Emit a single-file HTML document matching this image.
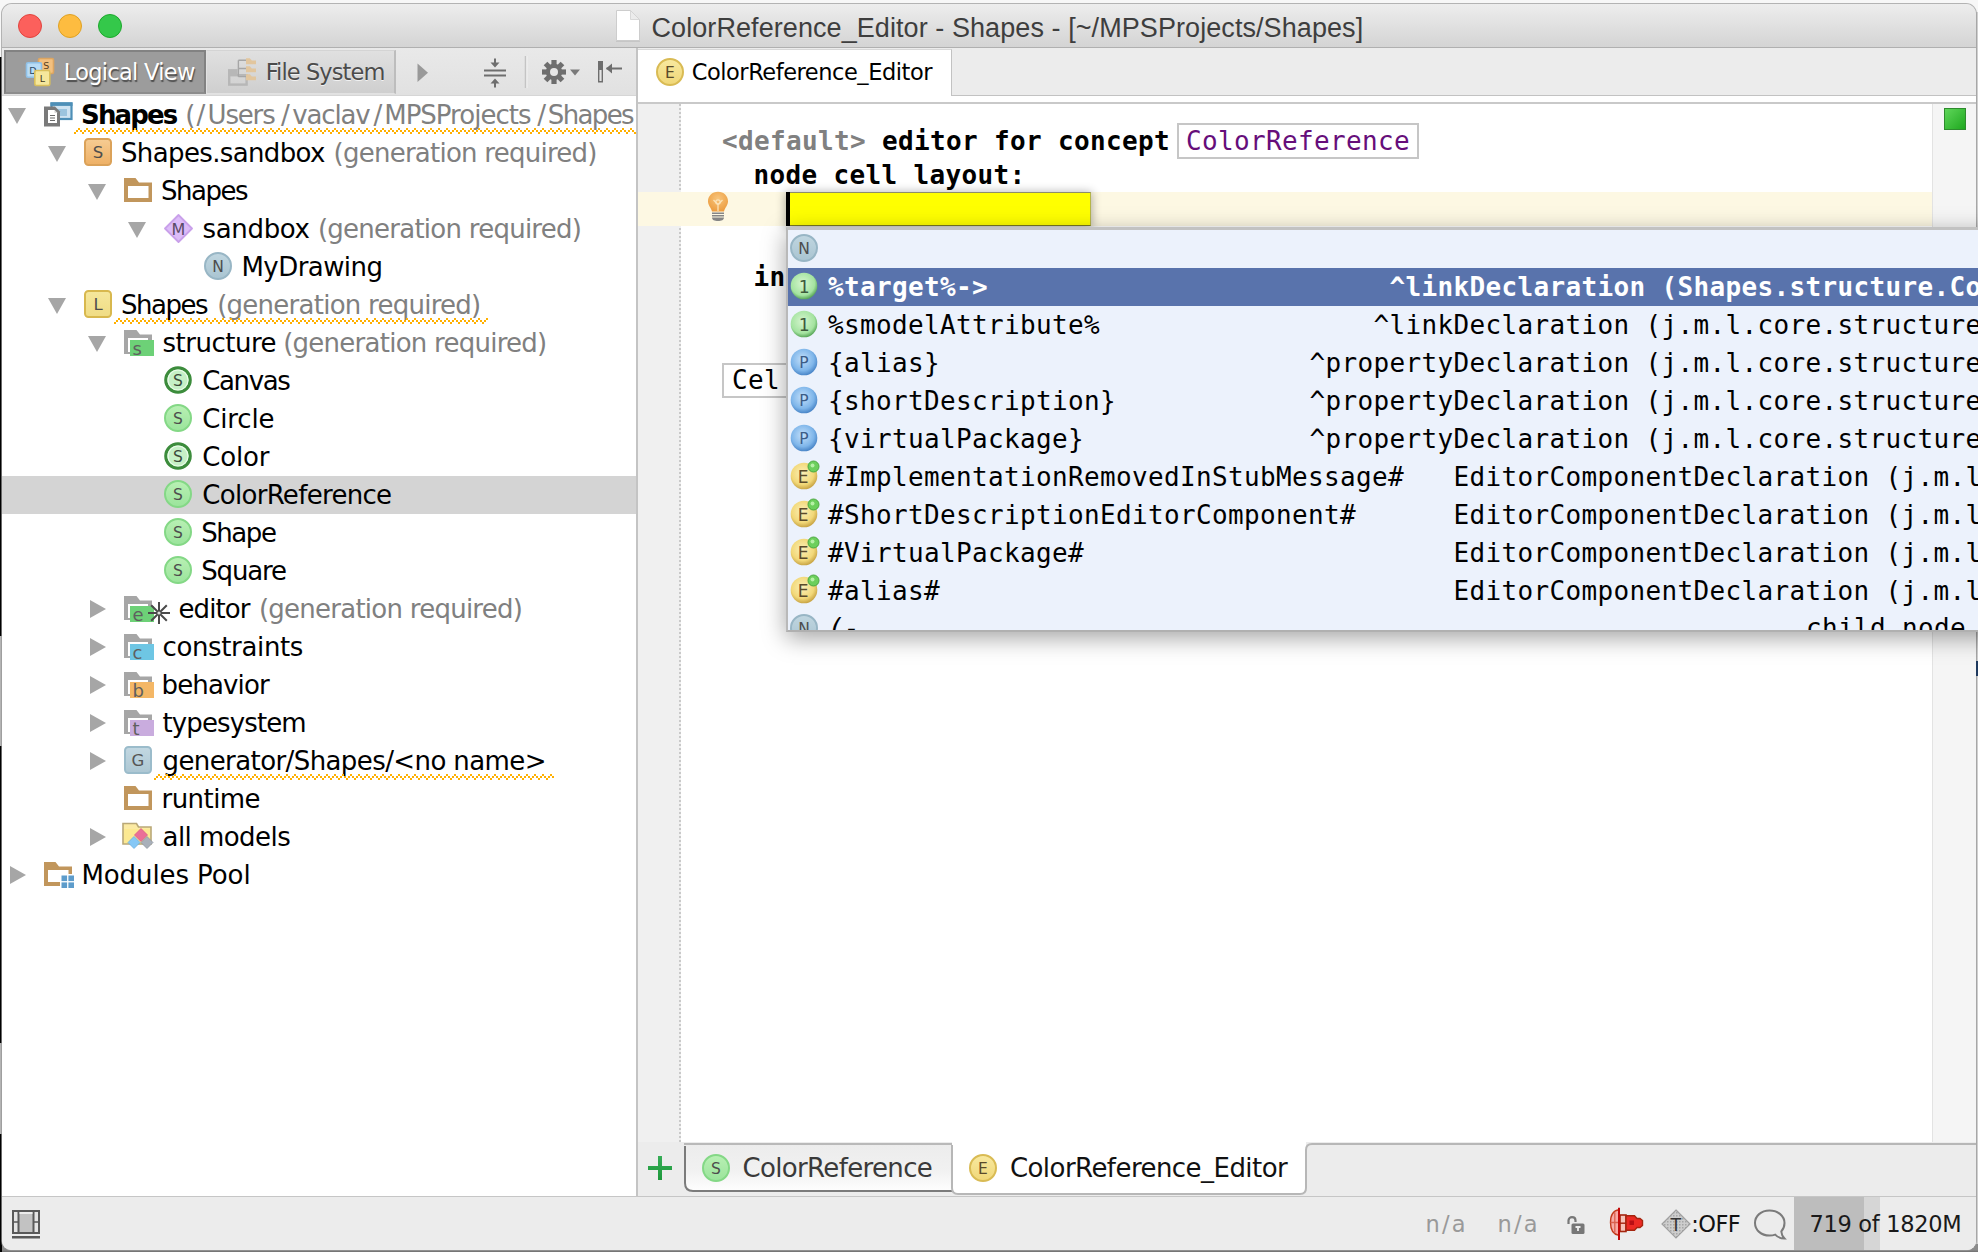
<!DOCTYPE html>
<html><head><meta charset="utf-8"><title>ColorReference_Editor - Shapes</title>
<style>
html,body{margin:0;padding:0;}
body{width:1978px;height:1252px;overflow:hidden;background:#f7f7f7;position:relative;font-family:"DejaVu Sans","Liberation Sans",sans-serif;}
.abs{position:absolute;}
#win{position:absolute;left:2px;top:4px;width:1974px;height:1246px;border-radius:10px 10px 9px 9px;overflow:hidden;background:#ececec;box-shadow:0 0 0 1px rgba(150,150,150,0.7);}
#in{position:absolute;left:-2px;top:-4px;width:1978px;height:1252px;}
#title{left:0;top:4px;width:1978px;height:43px;background:linear-gradient(#ededed,#d4d4d4);border-bottom:1px solid #b0b0b0;}
#titletext{left:651.5px;top:13px;font:27px "Liberation Sans",sans-serif;letter-spacing:0.075px;color:#3e3e3e;white-space:nowrap;}
.tl{position:absolute;top:14px;width:24px;height:24px;border-radius:50%;box-sizing:border-box;}
.t{position:absolute;white-space:nowrap;font-size:26px;letter-spacing:-0.75px;color:#000;line-height:38px;height:38px;}
.g{color:#808080;}.b{font-weight:bold;}
.mono{position:absolute;white-space:nowrap;font:26px "DejaVu Sans Mono","Liberation Mono",monospace;letter-spacing:0.347px;color:#000;line-height:38px;}
</style></head>
<body>
<!-- left edge strip -->
<div class="abs" style="left:0;top:57px;width:2px;height:579px;background:#000"></div>
<div class="abs" style="left:0;top:636px;width:2px;height:110px;background:#b4b4b4"></div>
<div class="abs" style="left:0;top:746px;width:2px;height:297px;background:#000"></div>
<div class="abs" style="left:0;top:1043px;width:2px;height:91px;background:#b4b4b4"></div>
<div class="abs" style="left:0;top:1134px;width:2px;height:118px;background:#000"></div>
<div class="abs" style="left:0;top:1240px;width:1978px;height:12px;background:linear-gradient(#8a8a8a,#8a8a8a 10px,#6f6f6f)"></div>
<div class="abs" style="left:0;top:1134px;width:2px;height:118px;background:#000"></div>
<div class="abs" style="left:1970px;top:12px;width:8px;height:1232px;background:#cfcfcf"></div>
<div id="win"><div id="in">
<!-- TITLE BAR -->
<div id="title" class="abs"></div>
<div class="tl" style="left:18px;background:#fc605c;border:1px solid #e0443e"></div>
<div class="tl" style="left:58px;background:#fdbc40;border:1px solid #dea123"></div>
<div class="tl" style="left:98px;background:#34c84a;border:1px solid #1ca82c"></div>
<svg class="abs" style="left:615px;top:9px" width="27" height="34" viewBox="0 0 27 34"><path d="M1.500 1.500H15.500L24.500 10.500V31.500H1.500Z" fill="#fff" stroke="#cdcdcd" stroke-width="1"/><path d="M15.500 1.500V10.500H24.500Z" fill="#ececec" stroke="#d2d2d2" stroke-width="0.800"/><path d="M1 32.300H25" stroke="#c2c2c2" stroke-width="1"/></svg>
<div id="titletext" class="abs">ColorReference_Editor - Shapes - [~/MPSProjects/Shapes]</div>
<!--TOOLBAR-->
<div class="abs" style="left:0;top:48px;width:637px;height:47px;background:linear-gradient(#e9e9e9,#e1e1e1);border-bottom:1px solid #d6d6d6"></div>
<div class="abs" style="left:4px;top:50px;width:202px;height:44px;box-sizing:border-box;background:#9c9c9c;border:2px solid #828282;border-bottom-color:#8c8c8c"></div>
<svg class="abs" style="left:24px;top:56px" width="32" height="32" viewBox="0 0 32 32">
 <rect x="14.5" y="2.5" width="15" height="15" rx="1.5" fill="#f3c07f" stroke="#dca561" stroke-width="1.6"/>
 <text x="22.3" y="13" font-family="DejaVu Sans, Liberation Sans, sans-serif" font-size="9.5" text-anchor="middle" fill="#5a4020">S</text>
 <rect x="2.5" y="6.8" width="15" height="14.5" rx="1.5" fill="#b9dcf6" stroke="#8fc0e6" stroke-width="1.6"/>
 <text x="9" y="17.5" font-family="DejaVu Sans, Liberation Sans, sans-serif" font-size="9.5" text-anchor="middle" fill="#2b4a66">D</text>
 <rect x="10.8" y="14.5" width="15" height="15" rx="1.5" fill="#f5e79c" stroke="#d9bf5c" stroke-width="1.6"/>
 <text x="18.3" y="25.6" font-family="DejaVu Sans, Liberation Sans, sans-serif" font-size="9.5" text-anchor="middle" fill="#40381a">L</text>
</svg>
<div class="abs" style="font-size:22.5px;line-height:28px;color:#fff;text-shadow:1px 2px 1px #4f4f4f;white-space:nowrap;left:63.7px;top:58px;letter-spacing:-0.700px">Logical View</div>
<div class="abs" style="left:206px;top:50px;width:189.5px;height:44px;box-sizing:border-box;background:linear-gradient(#e0e0e0,#cfcfcf);border:1px solid #e2e2e2;border-right:2px solid #bdbdbd;border-top-color:#d4d4d4"></div>
<svg class="abs" style="left:227px;top:56px" width="32" height="32" viewBox="0 0 32 32">
 <rect x="1" y="13.1" width="9.500" height="6" fill="#b7b7b7"/>
 <rect x="2.200" y="19.200" width="17.400" height="9.400" fill="none" stroke="#b7b7b7" stroke-width="2.400"/>
 <path d="M11.400 4.300V20.800M11.400 4.300H19M11.400 12.500H19M11.400 20.600H19" stroke="#a6a6a6" stroke-width="1.400" fill="none"/>
 <g fill="#e2c69e"><path d="M19 2.200h3.800l2 2.200h4.200v3.800h-10z"/><path d="M19 10.200h3.800l2 2.200h4.200v3.800h-10z"/><path d="M19 18.200h3.800l2 2.200h4.200v3.800h-10z"/></g>
</svg>
<div class="abs" style="font-size:22.5px;line-height:28px;color:#4b4b4b;text-shadow:0 1px 0 #f2f2f2;white-space:nowrap;left:265.7px;top:58px;letter-spacing:-0.900px">File System</div>
<svg class="abs" style="left:410px;top:56px" width="220" height="34" viewBox="0 0 220 34">
 <path d="M7.5 7.5 L18 16.7 L7.5 26 Z" fill="#999"/>
 <g stroke="#6e6e6e" stroke-width="2" fill="none"><path d="M74 14.5H96M74 19.5H96"/><path d="M85 2.5V9M85 25V31.5"/></g>
 <path d="M80.5 6.5h9L85 11.5zM80.5 27.5h9L85 22.5z" fill="#6e6e6e"/>
 <path d="M115.5 0V32" stroke="#c4c4c4" stroke-width="1.5"/><path d="M117 0V32" stroke="#f2f2f2" stroke-width="1"/>
 <g transform="translate(144,16)" fill="#6e6e6e"><circle r="8.2"/><g id="teeth"><rect x="-2.6" y="-12" width="5.2" height="24"/><rect x="-2.6" y="-12" width="5.2" height="24" transform="rotate(45)"/><rect x="-2.6" y="-12" width="5.2" height="24" transform="rotate(90)"/><rect x="-2.6" y="-12" width="5.2" height="24" transform="rotate(135)"/></g><circle r="4" fill="#e5e5e5"/></g>
 <path d="M160 13.5h10l-5 6z" fill="#7a7a7a"/>
 <rect x="188" y="5" width="5" height="21.5" fill="#6e6e6e"/><rect x="189.4" y="14" width="2.2" height="11" fill="#e5e5e5"/>
 <path d="M196.5 12.5H212" stroke="#6e6e6e" stroke-width="2"/><path d="M196 12.5l6-5v10z" fill="#6e6e6e"/>
</svg>
<div class="abs" style="left:0;top:96px;width:636px;height:1100px;background:#fff"></div>
<div class="abs" style="left:0;top:476px;width:636px;height:38px;background:#d4d4d4"></div>
<svg class="abs" style="left:8px;top:108px" width="18" height="16" viewBox="0 0 18 16"><path d="M0 0H18L9 16Z" fill="#a6a6a6"/></svg>
<svg class="abs" style="left:44px;top:102px" width="29" height="25" viewBox="0 0 29 25"><rect x="7.5" y="1.5" width="20" height="15.5" fill="#cfe3f1" stroke="#4e8fb7" stroke-width="2.2"/><rect x="6.5" y="0.3" width="22" height="3.6" fill="#4e8fb7"/><rect x="13" y="7" width="10" height="7" fill="#9cc4de"/><path d="M0 4.5H11L16 9.5V24.5H0Z" fill="#7a7a7a"/><path d="M4 8H10.5L13 10.5V21H4Z" fill="#fff"/><path d="M10.5 8V10.8H13Z" fill="#cfcfcf"/><path d="M6 13.5H11M6 16H11M6 18.5H11" stroke="#6a6a6a" stroke-width="1.1"/></svg>
<div class="t" style="font-weight:bold;left:81.1px;top:96px;letter-spacing:-1.860px">Shapes</div>
<div class="t" style="color:#808080;left:185.2px;top:96px;letter-spacing:1.100px">(/</div>
<div class="t" style="color:#808080;left:207.5px;top:96px;letter-spacing:-1.150px">Users</div>
<div class="t" style="color:#808080;left:281.1px;top:96px;letter-spacing:0.000px">/</div>
<div class="t" style="color:#808080;left:292.3px;top:96px;letter-spacing:-1.160px">vaclav</div>
<div class="t" style="color:#808080;left:373.4px;top:96px;letter-spacing:0.000px">/</div>
<div class="t" style="color:#808080;left:384.2px;top:96px;letter-spacing:-0.980px">MPSProjects</div>
<div class="t" style="color:#808080;left:537.2px;top:96px;letter-spacing:0.000px">/</div>
<div class="t" style="color:#808080;left:547.8px;top:96px;letter-spacing:-1.640px">Shapes</div>
<svg class="abs" style="left:48px;top:146px" width="18" height="16" viewBox="0 0 18 16"><path d="M0 0H18L9 16Z" fill="#a6a6a6"/></svg>
<svg class="abs" style="left:84px;top:138px" width="28" height="28" viewBox="0 0 28 28"><linearGradient id="g1" x1="0" y1="0" x2="0" y2="1"><stop offset="0" stop-color="#f6cc93"/><stop offset="1" stop-color="#eeb065"/></linearGradient><rect x="1" y="1" width="26" height="26" rx="3.5" fill="url(#g1)" stroke="#dba259" stroke-width="2"/><text x="14" y="20" font-family="DejaVu Sans, Liberation Sans, sans-serif" font-size="16.5" font-weight="normal" text-anchor="middle" fill="#4d4d4d">S</text></svg>
<div class="t" style="left:121.0px;top:134px;letter-spacing:-0.631px">Shapes.sandbox</div>
<div class="t" style="color:#808080;left:333.5px;top:134px;letter-spacing:-0.745px">(generation required)</div>
<svg class="abs" style="left:88px;top:184px" width="18" height="16" viewBox="0 0 18 16"><path d="M0 0H18L9 16Z" fill="#a6a6a6"/></svg>
<svg class="abs" style="left:124px;top:178px" width="28" height="24" viewBox="0 0 28 24"><path d="M0 0 H11.5 L15 4.5 H28 V24 H0 Z" fill="#c1965c"/><rect x="4" y="8" width="20.5" height="12" fill="#fff"/></svg>
<div class="t" style="left:160.9px;top:172px;letter-spacing:-1.440px">Shapes</div>
<svg class="abs" style="left:128px;top:222px" width="18" height="16" viewBox="0 0 18 16"><path d="M0 0H18L9 16Z" fill="#a6a6a6"/></svg>
<svg class="abs" style="left:163.5px;top:213.5px" width="29" height="29" viewBox="0 0 29 29"><path d="M14.5 1 L28 14.5 L14.5 28 L1 14.5 Z" fill="#dcbcf8" stroke="#c9a0ea" stroke-width="1.8" stroke-linejoin="round"/><text x="14.5" y="20.5" font-family="DejaVu Sans, Liberation Sans, sans-serif" font-size="16" font-weight="normal" text-anchor="middle" fill="#5a4a66">M</text></svg>
<div class="t" style="left:202.5px;top:210px;letter-spacing:-0.333px">sandbox</div>
<div class="t" style="color:#808080;left:317.9px;top:210px;letter-spacing:-0.745px">(generation required)</div>
<svg class="abs" style="left:204px;top:252px" width="28" height="28" viewBox="0 0 28 28"><linearGradient id="g2" x1="0" y1="0" x2="0" y2="1"><stop offset="0" stop-color="#c0d6e0"/><stop offset="1" stop-color="#a9c4d1"/></linearGradient><circle cx="14" cy="14" r="13.0" fill="url(#g2)" stroke="#98b6c5" stroke-width="2"/><text x="14" y="19.6" font-family="DejaVu Sans, Liberation Sans, sans-serif" font-size="15.5" font-weight="normal" text-anchor="middle" fill="#4d4d4d">N</text></svg>
<div class="t" style="left:241.5px;top:248px;letter-spacing:-0.562px">MyDrawing</div>
<svg class="abs" style="left:48px;top:298px" width="18" height="16" viewBox="0 0 18 16"><path d="M0 0H18L9 16Z" fill="#a6a6a6"/></svg>
<svg class="abs" style="left:84px;top:290px" width="28" height="28" viewBox="0 0 28 28"><linearGradient id="g3" x1="0" y1="0" x2="0" y2="1"><stop offset="0" stop-color="#f5e79c"/><stop offset="1" stop-color="#f0dc84"/></linearGradient><rect x="1" y="1" width="26" height="26" rx="3.5" fill="url(#g3)" stroke="#d8b84e" stroke-width="2"/><text x="14" y="20" font-family="DejaVu Sans, Liberation Sans, sans-serif" font-size="16.5" font-weight="normal" text-anchor="middle" fill="#4d4d4d">L</text></svg>
<div class="t" style="left:121.1px;top:286px;letter-spacing:-1.520px">Shapes</div>
<div class="t" style="color:#808080;left:217.2px;top:286px;letter-spacing:-0.745px">(generation required)</div>
<svg class="abs" style="left:88px;top:336px" width="18" height="16" viewBox="0 0 18 16"><path d="M0 0H18L9 16Z" fill="#a6a6a6"/></svg>
<svg class="abs" style="left:124px;top:330px" width="32" height="28" viewBox="0 0 32 28"><path d="M0 0 H12.5 L16 4.5 H28 V24 H0 Z" fill="#a6a6a6"/><rect x="4" y="8" width="20" height="14" fill="#fff"/><rect x="6" y="10" width="24" height="16" fill="#6dd177"/><text x="8.5" y="24.5" font-family="DejaVu Sans, Liberation Sans, sans-serif" font-size="18" fill="#5f5f5f">s</text></svg>
<div class="t" style="left:162.5px;top:324px;letter-spacing:-0.500px">structure</div>
<div class="t" style="color:#808080;left:283.2px;top:324px;letter-spacing:-0.745px">(generation required)</div>
<svg class="abs" style="left:164px;top:366px" width="28" height="28" viewBox="0 0 28 28"><circle cx="14" cy="14" r="12.2" fill="#c6f0c6" stroke="#3c8c3c" stroke-width="3.2"/><circle cx="14" cy="14" r="10" fill="none" stroke="#e9fbe9" stroke-width="1.2"/><text x="14" y="19.6" font-family="DejaVu Sans, Liberation Sans, sans-serif" font-size="15.5" font-weight="normal" text-anchor="middle" fill="#3a4a3a">S</text></svg>
<div class="t" style="left:202.2px;top:362px;letter-spacing:-1.340px">Canvas</div>
<svg class="abs" style="left:164px;top:404px" width="28" height="28" viewBox="0 0 28 28"><linearGradient id="g4" x1="0" y1="0" x2="0" y2="1"><stop offset="0" stop-color="#b9f0b4"/><stop offset="1" stop-color="#9ae49b"/></linearGradient><circle cx="14" cy="14" r="13.0" fill="url(#g4)" stroke="#84d886" stroke-width="2"/><text x="14" y="19.6" font-family="DejaVu Sans, Liberation Sans, sans-serif" font-size="15.5" font-weight="normal" text-anchor="middle" fill="#4d4d4d">S</text></svg>
<div class="t" style="left:202.2px;top:400px;letter-spacing:-0.140px">Circle</div>
<svg class="abs" style="left:164px;top:442px" width="28" height="28" viewBox="0 0 28 28"><circle cx="14" cy="14" r="12.2" fill="#c6f0c6" stroke="#3c8c3c" stroke-width="3.2"/><circle cx="14" cy="14" r="10" fill="none" stroke="#e9fbe9" stroke-width="1.2"/><text x="14" y="19.6" font-family="DejaVu Sans, Liberation Sans, sans-serif" font-size="15.5" font-weight="normal" text-anchor="middle" fill="#3a4a3a">S</text></svg>
<div class="t" style="left:202.2px;top:438px;letter-spacing:-0.175px">Color</div>
<svg class="abs" style="left:164px;top:480px" width="28" height="28" viewBox="0 0 28 28"><linearGradient id="g5" x1="0" y1="0" x2="0" y2="1"><stop offset="0" stop-color="#b9f0b4"/><stop offset="1" stop-color="#9ae49b"/></linearGradient><circle cx="14" cy="14" r="13.0" fill="url(#g5)" stroke="#84d886" stroke-width="2"/><text x="14" y="19.6" font-family="DejaVu Sans, Liberation Sans, sans-serif" font-size="15.5" font-weight="normal" text-anchor="middle" fill="#4d4d4d">S</text></svg>
<div class="t" style="left:202.2px;top:476px;letter-spacing:-0.685px">ColorReference</div>
<svg class="abs" style="left:164px;top:518px" width="28" height="28" viewBox="0 0 28 28"><linearGradient id="g6" x1="0" y1="0" x2="0" y2="1"><stop offset="0" stop-color="#b9f0b4"/><stop offset="1" stop-color="#9ae49b"/></linearGradient><circle cx="14" cy="14" r="13.0" fill="url(#g6)" stroke="#84d886" stroke-width="2"/><text x="14" y="19.6" font-family="DejaVu Sans, Liberation Sans, sans-serif" font-size="15.5" font-weight="normal" text-anchor="middle" fill="#4d4d4d">S</text></svg>
<div class="t" style="left:201.2px;top:514px;letter-spacing:-1.425px">Shape</div>
<svg class="abs" style="left:164px;top:556px" width="28" height="28" viewBox="0 0 28 28"><linearGradient id="g7" x1="0" y1="0" x2="0" y2="1"><stop offset="0" stop-color="#b9f0b4"/><stop offset="1" stop-color="#9ae49b"/></linearGradient><circle cx="14" cy="14" r="13.0" fill="url(#g7)" stroke="#84d886" stroke-width="2"/><text x="14" y="19.6" font-family="DejaVu Sans, Liberation Sans, sans-serif" font-size="15.5" font-weight="normal" text-anchor="middle" fill="#4d4d4d">S</text></svg>
<div class="t" style="left:201.2px;top:552px;letter-spacing:-1.140px">Square</div>
<svg class="abs" style="left:90px;top:600px" width="16" height="18" viewBox="0 0 16 18"><path d="M0 0L16 9L0 18Z" fill="#a6a6a6"/></svg>
<svg class="abs" style="left:124px;top:596px" width="32" height="28" viewBox="0 0 32 28"><path d="M0 0 H12.5 L16 4.5 H28 V24 H0 Z" fill="#a6a6a6"/><rect x="4" y="8" width="20" height="14" fill="#fff"/><rect x="6" y="10" width="24" height="16" fill="#6dd177"/><text x="8.5" y="24.5" font-family="DejaVu Sans, Liberation Sans, sans-serif" font-size="18" fill="#5f5f5f">e</text></svg>
<svg class="abs" style="left:146px;top:600px" width="26" height="26" viewBox="0 0 26 26"><g stroke="#4a4a4a" stroke-width="2"><path d="M2 13H24M13 2V24M5.200 5.200L20.800 20.800M20.800 5.200L5.200 20.800"/></g><circle cx="13" cy="13" r="1.6" fill="#ddd"/></svg>
<div class="t" style="left:178.5px;top:590px;letter-spacing:-0.920px">editor</div>
<div class="t" style="color:#808080;left:258.9px;top:590px;letter-spacing:-0.745px">(generation required)</div>
<svg class="abs" style="left:90px;top:638px" width="16" height="18" viewBox="0 0 16 18"><path d="M0 0L16 9L0 18Z" fill="#a6a6a6"/></svg>
<svg class="abs" style="left:124px;top:634px" width="32" height="28" viewBox="0 0 32 28"><path d="M0 0 H12.5 L16 4.5 H28 V24 H0 Z" fill="#a6a6a6"/><rect x="4" y="8" width="20" height="14" fill="#fff"/><rect x="6" y="10" width="24" height="16" fill="#6ec6e4"/><text x="8.5" y="24.5" font-family="DejaVu Sans, Liberation Sans, sans-serif" font-size="18" fill="#5f5f5f">c</text></svg>
<div class="t" style="left:162.5px;top:628px;letter-spacing:-0.360px">constraints</div>
<svg class="abs" style="left:90px;top:676px" width="16" height="18" viewBox="0 0 16 18"><path d="M0 0L16 9L0 18Z" fill="#a6a6a6"/></svg>
<svg class="abs" style="left:124px;top:672px" width="32" height="28" viewBox="0 0 32 28"><path d="M0 0 H12.5 L16 4.5 H28 V24 H0 Z" fill="#a6a6a6"/><rect x="4" y="8" width="20" height="14" fill="#fff"/><rect x="6" y="10" width="24" height="16" fill="#f4b766"/><text x="8.5" y="24.5" font-family="DejaVu Sans, Liberation Sans, sans-serif" font-size="18" fill="#5f5f5f">b</text></svg>
<div class="t" style="left:161.5px;top:666px;letter-spacing:-0.857px">behavior</div>
<svg class="abs" style="left:90px;top:714px" width="16" height="18" viewBox="0 0 16 18"><path d="M0 0L16 9L0 18Z" fill="#a6a6a6"/></svg>
<svg class="abs" style="left:124px;top:710px" width="32" height="28" viewBox="0 0 32 28"><path d="M0 0 H12.5 L16 4.5 H28 V24 H0 Z" fill="#a6a6a6"/><rect x="4" y="8" width="20" height="14" fill="#fff"/><rect x="6" y="10" width="24" height="16" fill="#c9acde"/><text x="8.5" y="24.5" font-family="DejaVu Sans, Liberation Sans, sans-serif" font-size="18" fill="#5f5f5f">t</text></svg>
<div class="t" style="left:162.5px;top:704px;letter-spacing:-0.878px">typesystem</div>
<svg class="abs" style="left:90px;top:752px" width="16" height="18" viewBox="0 0 16 18"><path d="M0 0L16 9L0 18Z" fill="#a6a6a6"/></svg>
<svg class="abs" style="left:124px;top:746px" width="28" height="28" viewBox="0 0 28 28"><linearGradient id="g8" x1="0" y1="0" x2="0" y2="1"><stop offset="0" stop-color="#c3d8e2"/><stop offset="1" stop-color="#adc7d3"/></linearGradient><rect x="1" y="1" width="26" height="26" rx="3.5" fill="url(#g8)" stroke="#9bbccb" stroke-width="2"/><text x="14" y="20" font-family="DejaVu Sans, Liberation Sans, sans-serif" font-size="16.5" font-weight="normal" text-anchor="middle" fill="#555">G</text></svg>
<div class="t" style="left:162.5px;top:742px;letter-spacing:-0.592px">generator/Shapes/&lt;no name&gt;</div>
<svg class="abs" style="left:124px;top:786px" width="28" height="24" viewBox="0 0 28 24"><path d="M0 0 H11.5 L15 4.5 H28 V24 H0 Z" fill="#c1965c"/><rect x="4" y="8" width="20.5" height="12" fill="#fff"/></svg>
<div class="t" style="left:161.5px;top:780px;letter-spacing:-0.550px">runtime</div>
<svg class="abs" style="left:90px;top:828px" width="16" height="18" viewBox="0 0 16 18"><path d="M0 0L16 9L0 18Z" fill="#a6a6a6"/></svg>
<svg class="abs" style="left:122px;top:822px" width="32" height="28" viewBox="0 0 32 28"><path d="M1 1.5H14.5L16.5 5H29V22H1Z" fill="#fbeaa3" stroke="#b9a877" stroke-width="1.6"/><path d="M2 7H28V21H2Z" fill="#fce992"/><path d="M19 6.5L25.5 13L19 19.5L12.500 13Z" fill="#ea6f98" stroke="#d85c86" stroke-width="0.8"/><path d="M12 14.5L18 20.5L12 26.500L6 20.500Z" fill="#86c8f6" stroke="#6aaee0" stroke-width="0.8"/><path d="M25 14.5L31 20.5L25 26.500L19 20.500Z" fill="#a9b0ba" stroke="#8e959f" stroke-width="0.8"/></svg>
<div class="t" style="left:162.5px;top:818px;letter-spacing:-0.544px">all models</div>
<svg class="abs" style="left:10px;top:866px" width="16" height="18" viewBox="0 0 16 18"><path d="M0 0L16 9L0 18Z" fill="#a6a6a6"/></svg>
<svg class="abs" style="left:44px;top:862px" width="31" height="27" viewBox="0 0 31 27"><path d="M0 0 H11.5 L15 4.500 H28 V24 H0 Z" fill="#c1965c"/><rect x="4" y="8" width="20.5" height="12" fill="#fff"/><rect x="16" y="12" width="15" height="15" fill="#fff"/><g fill="#5d9ccb"><rect x="17.500" y="13.500" width="5.600" height="5.600"/><rect x="24.400" y="13.500" width="5.600" height="5.600"/><rect x="17.500" y="20.400" width="5.600" height="5.600"/><rect x="24.400" y="20.400" width="5.600" height="5.600"/></g></svg>
<div class="t" style="left:81.4px;top:856px;letter-spacing:-0.082px">Modules Pool</div>
<svg class="abs" style="left:74px;top:128px" width="562" height="6" viewBox="0 0 562 6"><defs><pattern id="wv1" width="8" height="6" patternUnits="userSpaceOnUse"><g fill="#ffb000"><rect x="0" y="4" width="2" height="2"/><rect x="2" y="2" width="2" height="2"/><rect x="4" y="0" width="2" height="2"/><rect x="6" y="2" width="2" height="2"/></g></pattern></defs><rect width="562" height="6" fill="url(#wv1)"/></svg>
<svg class="abs" style="left:114px;top:318px" width="374" height="6" viewBox="0 0 374 6"><defs><pattern id="wv2" width="8" height="6" patternUnits="userSpaceOnUse"><g fill="#ffb000"><rect x="0" y="4" width="2" height="2"/><rect x="2" y="2" width="2" height="2"/><rect x="4" y="0" width="2" height="2"/><rect x="6" y="2" width="2" height="2"/></g></pattern></defs><rect width="374" height="6" fill="url(#wv2)"/></svg>
<svg class="abs" style="left:154px;top:774px" width="400" height="6" viewBox="0 0 400 6"><defs><pattern id="wv3" width="8" height="6" patternUnits="userSpaceOnUse"><g fill="#ffb000"><rect x="0" y="4" width="2" height="2"/><rect x="2" y="2" width="2" height="2"/><rect x="4" y="0" width="2" height="2"/><rect x="6" y="2" width="2" height="2"/></g></pattern></defs><rect width="400" height="6" fill="url(#wv3)"/></svg>
<div class="abs" style="left:636px;top:48px;width:2px;height:1148px;background:#c4c4c4"></div>
<div class="abs" style="left:638px;top:48px;width:1340px;height:47px;background:#ececec;border-bottom:1px solid #c2c2c2"></div>
<div class="abs" style="left:638px;top:96px;width:1340px;height:6px;background:#fff;border-bottom:2px solid #c9c9c9"></div>
<div class="abs" style="left:638px;top:49px;width:314px;height:47px;background:#fff;border-right:1px solid #c2c2c2;border-top:1px solid #d8d8d8;box-sizing:border-box"></div>
<svg class="abs" style="left:656px;top:58px" width="28" height="28" viewBox="0 0 28 28"><linearGradient id="g9" x1="0" y1="0" x2="0" y2="1"><stop offset="0" stop-color="#f8e9a0"/><stop offset="1" stop-color="#f0d777"/></linearGradient><circle cx="14" cy="14" r="13.0" fill="url(#g9)" stroke="#d9bb54" stroke-width="2"/><text x="14" y="19.6" font-family="DejaVu Sans, Liberation Sans, sans-serif" font-size="15.5" font-weight="normal" text-anchor="middle" fill="#5a4a2a">E</text></svg>
<div class="abs" style="font-size:22.5px;line-height:28px;color:#000;white-space:nowrap;left:691.7px;top:58px;letter-spacing:-0.455px">ColorReference_Editor</div>
<div class="abs" style="left:638px;top:104px;width:1340px;height:1040px;background:#fff"></div>
<div class="abs" style="left:638px;top:104px;width:41px;height:1038px;background:#f0f0f0;border-right:2px dotted #c9c9c9"></div>
<div class="abs" style="left:1932px;top:104px;width:45px;height:1040px;background:#f5f5f5;border-left:1px solid #e3e3e3;box-sizing:border-box"></div>
<div class="abs" style="left:1944px;top:108px;width:22px;height:22px;box-sizing:border-box;background:linear-gradient(135deg,#5fd65a,#1fa81f);border:1px solid #2e8b2e"></div>
<div class="abs" style="left:1976px;top:664px;width:2px;height:12px;background:#1f3a5f"></div>
<div class="abs" style="left:638px;top:192px;width:1294px;height:34px;background:#fdf8e3"></div>
<div class="abs" style="left:638px;top:192px;width:42px;height:34px;background:#fdf8e3"></div>
<div class="mono" style="left:722px;top:122px"><span style="color:#808080;font-weight:bold">&lt;default&gt;</span> <b>editor for concept</b></div>
<div class="abs" style="left:1177px;top:123px;width:242px;height:36px;box-sizing:border-box;border:2px solid #c6c6c6;background:#fff"></div>
<div class="mono" style="left:1186px;top:122px;color:#660e7a">ColorReference</div>
<div class="mono" style="left:753.5px;top:156px"><b>node cell layout:</b></div>
<div class="mono" style="left:753.5px;top:258px"><b>in</b></div>
<div class="abs" style="left:722px;top:363px;width:80px;height:35px;box-sizing:border-box;border:2px solid #c6c6c6;background:#fff"></div>
<div class="mono" style="left:732px;top:361px">Cel</div>
<svg class="abs" style="left:707px;top:191px" width="22" height="31" viewBox="0 0 22 31"><defs><radialGradient id="bulb" cx="0.5" cy="0.35" r="0.7"><stop offset="0" stop-color="#f8c57c"/><stop offset="1" stop-color="#eb9a3c"/></radialGradient></defs><path d="M11 0.8C5.200 0.800 1 5 1 10.300C1 14.500 4 16.500 5 20.500H17C18 16.500 21 14.500 21 10.300C21 5 16.800 0.800 11 0.800Z" fill="url(#bulb)"/><path d="M6.500 9L11 13.500L15.500 9M11 13.500V20" stroke="#fbe3b8" stroke-width="1.3" fill="none"/><circle cx="11" cy="11" r="2.2" fill="none" stroke="#fbe3b8" stroke-width="1.2"/><path d="M5 21.500H17V23H5ZM5 24H17V25.500H5ZM5 26.500H17C17 29 14.500 30 11 30C7.500 30 5 29 5 26.500Z" fill="#858585"/></svg>
<div class="abs" style="left:638px;top:1142px;width:1340px;height:54px;background:#ececec"></div>
<svg class="abs" style="left:638px;top:1138px" width="1340" height="60" viewBox="0 0 1340 60"><defs><linearGradient id="tabg" x1="0" y1="0" x2="0" y2="1"><stop offset="0" stop-color="#ececec"/><stop offset="0.55" stop-color="#f1f1f1"/><stop offset="1" stop-color="#fefefe"/></linearGradient></defs><path d="M314 0 H668 V50 Q668 56 662 56 H320 Q314 56 314 50 Z" fill="#fff"/><path d="M47 6 H314 V53 H55 Q47 53 47 45 Z" fill="url(#tabg)"/><path d="M46 6 H314" stroke="#b9b9b9" stroke-width="2" fill="none"/><path d="M47 8 V45 Q47 53 55 53 H314" stroke="#7b7b7b" stroke-width="2" fill="none"/><path d="M314 7 V50 Q314 56 320 56 H662 Q668 56 668 50 V12 Q668 6 674 6 H1340" stroke="#b7b7b7" stroke-width="2" fill="none"/><rect x="314.500" y="0" width="353" height="5" fill="#fff"/></svg>
<svg class="abs" style="left:648px;top:1156px" width="24" height="24" viewBox="0 0 24 24"><defs><linearGradient id="plg" x1="0" y1="0" x2="0" y2="1"><stop offset="0" stop-color="#36ad56"/><stop offset="1" stop-color="#1d983b"/></linearGradient></defs><path d="M10 0H14V10H24V14H14V24H10V14H0V10H10Z" fill="url(#plg)"/></svg>
<svg class="abs" style="left:702px;top:1154px" width="28" height="28" viewBox="0 0 28 28"><linearGradient id="g12" x1="0" y1="0" x2="0" y2="1"><stop offset="0" stop-color="#b9f0b4"/><stop offset="1" stop-color="#9ae49b"/></linearGradient><circle cx="14" cy="14" r="13.0" fill="url(#g12)" stroke="#84d886" stroke-width="2"/><text x="14" y="19.6" font-family="DejaVu Sans, Liberation Sans, sans-serif" font-size="15.5" font-weight="normal" text-anchor="middle" fill="#4d4d4d">S</text></svg>
<div class="t" style="color:#3a3a3a;left:742.4px;top:1149px;letter-spacing:-0.646px">ColorReference</div>
<svg class="abs" style="left:969px;top:1154px" width="28" height="28" viewBox="0 0 28 28"><linearGradient id="g13" x1="0" y1="0" x2="0" y2="1"><stop offset="0" stop-color="#f8e9a0"/><stop offset="1" stop-color="#f0d777"/></linearGradient><circle cx="14" cy="14" r="13.0" fill="url(#g13)" stroke="#d9bb54" stroke-width="2"/><text x="14" y="19.6" font-family="DejaVu Sans, Liberation Sans, sans-serif" font-size="15.5" font-weight="normal" text-anchor="middle" fill="#5a4a2a">E</text></svg>
<div class="t" style="color:#111;left:1009.9px;top:1149px;letter-spacing:-0.545px">ColorReference_Editor</div>
<div class="abs" style="left:0;top:1196px;width:1978px;height:56px;background:#ececec;border-top:1px solid #c6c6c6;box-sizing:border-box"></div>
<svg class="abs" style="left:12px;top:1210px" width="28" height="29" viewBox="0 0 28 29"><rect x="1" y="1" width="26" height="22" fill="#e4e4e4" stroke="#595959" stroke-width="2"/><rect x="7" y="2" width="14" height="20" fill="#c2c2c2"/><path d="M6.500 1V23M21.500 1V23" stroke="#595959" stroke-width="2"/><rect x="7.500" y="2" width="13" height="2" fill="#ececec"/><path d="M1 12H6M22 12H27" stroke="#595959" stroke-width="1.5"/><rect x="0" y="26" width="28" height="2.500" fill="#595959"/></svg>
<div class="abs" style="left:1794px;top:1197px;width:184px;height:55px;background:#ececec"></div>
<div class="abs" style="left:1794px;top:1197px;width:70px;height:55px;background:#bdbdbd"></div>
<div class="abs" style="left:1864px;top:1197px;width:16px;height:55px;background:#d6d6d6"></div>
<div class="abs" style="font-size:22.5px;line-height:28px;white-space:nowrap;letter-spacing:-0.5px;color:#999;left:1425.5px;top:1210px;letter-spacing:2.200px">n/a</div>
<div class="abs" style="font-size:22.5px;line-height:28px;white-space:nowrap;letter-spacing:-0.5px;color:#999;left:1497.5px;top:1210px;letter-spacing:2.200px">n/a</div>
<svg class="abs" style="left:1565px;top:1215px" width="22" height="20" viewBox="0 0 22 20"><path d="M3.500 9V5.500C3.500 1 10.500 1 10.500 5.500V7" fill="none" stroke="#777" stroke-width="2.200"/><rect x="6.500" y="8.500" width="13" height="10.500" rx="1.500" fill="#777"/><path d="M10.500 12H15.500M13 12V16" stroke="#eee" stroke-width="1.800"/></svg>
<svg class="abs" style="left:1608px;top:1207px" width="36" height="34" viewBox="0 0 36 34"><path d="M11 2.800C5 3.500 2.500 9 2.500 15.500C2.500 22 5 27.500 11 28.400Z" fill="#f7aaa4" stroke="#c23a1c" stroke-width="1.400"/><path d="M6.800 5.500V25.500M2.500 15.500H11" stroke="#d9614f" stroke-width="1.300" fill="none"/><rect x="12" y="8" width="6" height="16.500" fill="#f6c4ba" stroke="#a5250f" stroke-width="1.600"/><path d="M12 16.200H18" stroke="#a5250f" stroke-width="1.400"/><path d="M18 8.800H26.500L29 11.500H32L34.500 13.500V18.500L32 20.500H29L26.500 23.200H18Z" fill="#ec2a24" stroke="#a5250f" stroke-width="1.400"/><rect x="21.500" y="13.500" width="4.500" height="4.500" fill="#b80f14"/><path d="M11 0.800V33" stroke="#c40a0a" stroke-width="2"/></svg>
<svg class="abs" style="left:1661px;top:1209px" width="30" height="30" viewBox="0 0 30 30"><defs><pattern id="dots" width="3" height="3" patternUnits="userSpaceOnUse"><rect width="3" height="3" fill="#cdcdcd"/><rect width="1.500" height="1.500" fill="#a6a6a6"/></pattern></defs><path d="M15 1L29 15L15 29L1 15Z" fill="url(#dots)" stroke="#a0a0a0" stroke-width="1.200"/><text x="15" y="21.5" font-family="DejaVu Sans, Liberation Sans, sans-serif" font-size="17" font-weight="normal" text-anchor="middle" fill="#333">T</text></svg>
<div class="abs" style="font-size:22.5px;line-height:28px;white-space:nowrap;letter-spacing:-0.5px;color:#111;left:1691.3px;top:1210px;letter-spacing:-0.600px">:OFF</div>
<svg class="abs" style="left:1753px;top:1209px" width="35" height="31" viewBox="0 0 35 31"><path d="M16.500 1.500C8 1.500 2 7 2 14C2 21 8 26.500 16.500 26.500C18.500 26.500 20.500 26.200 22.200 25.600C24 27.500 27.500 29.500 31.500 29.500C29.500 27.500 28.500 25 28.300 22.500C30.300 20.200 31.500 17.300 31.500 14C31.500 7 25 1.500 16.500 1.500Z" fill="none" stroke="#7b7b7b" stroke-width="2"/></svg>
<div class="abs" style="font-size:22.5px;line-height:28px;white-space:nowrap;letter-spacing:-0.5px;color:#1a1a1a;left:1809.5px;top:1210px;letter-spacing:-0.318px">719 of 1820M</div>
</div></div>
<div class="abs" style="left:1976px;top:661px;width:2px;height:15px;background:#1f3a5f"></div>
<div class="abs" style="left:786px;top:192px;width:305px;height:34px;background:#ffff00;box-sizing:border-box;border-top:1px solid #8d8d6a;border-bottom:1px solid #7a7a20;border-right:1px solid #b5b54a;box-shadow:0 1px 9px 1px rgba(0,0,0,0.30)"></div>
<div class="abs" style="left:786px;top:227px;width:1300px;height:405px;background:#ecf2fc;box-shadow:0 6px 22px 0 rgba(0,0,0,0.36);border-left:2px solid #b9b9b9;border-top:3px solid #c2c2c2;border-bottom:2px solid #b0b0b0;box-sizing:border-box"></div>
<div class="abs" style="left:786px;top:192px;width:4px;height:34px;background:#000"></div>
<div class="abs" style="left:788px;top:268px;width:1200px;height:38px;background:#5973ac"></div>
<div class="abs" style="left:788px;top:230px;width:1190px;height:400px;overflow:hidden">
<svg class="abs" style="left:2px;top:4px" width="28" height="28" viewBox="0 0 28 28"><linearGradient id="g10" x1="0" y1="0" x2="0" y2="1"><stop offset="0" stop-color="#c0d6e0"/><stop offset="1" stop-color="#a9c4d1"/></linearGradient><circle cx="14" cy="14" r="13.0" fill="url(#g10)" stroke="#98b6c5" stroke-width="2"/><text x="14" y="19.6" font-family="DejaVu Sans, Liberation Sans, sans-serif" font-size="15.5" font-weight="normal" text-anchor="middle" fill="#4d4d4d">N</text></svg>
<svg class="abs" style="left:2px;top:42px" width="28" height="28" viewBox="0 0 28 28"><defs><radialGradient id="og42" cx="0.45" cy="0.4" r="0.6"><stop offset="0" stop-color="#d6f5d0"/><stop offset="0.75" stop-color="#a4e3a0"/><stop offset="1" stop-color="#5aa85a"/></radialGradient></defs><circle cx="14" cy="14" r="13.300" fill="url(#og42)"/><text x="14" y="20.5" font-family="DejaVu Sans Mono, Liberation Sans, sans-serif" font-size="18" font-weight="normal" text-anchor="middle" fill="#3d5a3d">1</text></svg>
<div class="mono" style="left:40px;top:38px;color:#fff;font-weight:bold;">%target%-&gt;</div>
<div class="mono" style="left:601.5px;top:38px;color:#fff;font-weight:bold;">^linkDeclaration (Shapes.structure.ColorReference)</div>
<svg class="abs" style="left:2px;top:80px" width="28" height="28" viewBox="0 0 28 28"><defs><radialGradient id="og80" cx="0.45" cy="0.4" r="0.6"><stop offset="0" stop-color="#d6f5d0"/><stop offset="0.75" stop-color="#a4e3a0"/><stop offset="1" stop-color="#5aa85a"/></radialGradient></defs><circle cx="14" cy="14" r="13.300" fill="url(#og80)"/><text x="14" y="20.5" font-family="DejaVu Sans Mono, Liberation Sans, sans-serif" font-size="18" font-weight="normal" text-anchor="middle" fill="#3d5a3d">1</text></svg>
<div class="mono" style="left:40px;top:76px;">%smodelAttribute%</div>
<div class="mono" style="left:585.5px;top:76px;">^linkDeclaration (j.m.l.core.structure.BaseConcept)</div>
<svg class="abs" style="left:2px;top:118px" width="28" height="28" viewBox="0 0 28 28"><defs><radialGradient id="pg118" cx="0.45" cy="0.4" r="0.6"><stop offset="0" stop-color="#c4e0fa"/><stop offset="0.700" stop-color="#7fb6ea"/><stop offset="1" stop-color="#4a86c8"/></radialGradient></defs><circle cx="14" cy="14" r="13.300" fill="url(#pg118)"/><text x="14" y="20" font-family="DejaVu Sans, Liberation Sans, sans-serif" font-size="15.5" font-weight="normal" text-anchor="middle" fill="#3c5c86">P</text></svg>
<div class="mono" style="left:40px;top:114px;">{alias}</div>
<div class="mono" style="left:521.5px;top:114px;">^propertyDeclaration (j.m.l.core.structure.BaseConcept)</div>
<svg class="abs" style="left:2px;top:156px" width="28" height="28" viewBox="0 0 28 28"><defs><radialGradient id="pg156" cx="0.45" cy="0.4" r="0.6"><stop offset="0" stop-color="#c4e0fa"/><stop offset="0.700" stop-color="#7fb6ea"/><stop offset="1" stop-color="#4a86c8"/></radialGradient></defs><circle cx="14" cy="14" r="13.300" fill="url(#pg156)"/><text x="14" y="20" font-family="DejaVu Sans, Liberation Sans, sans-serif" font-size="15.5" font-weight="normal" text-anchor="middle" fill="#3c5c86">P</text></svg>
<div class="mono" style="left:40px;top:152px;">{shortDescription}</div>
<div class="mono" style="left:521.5px;top:152px;">^propertyDeclaration (j.m.l.core.structure.BaseConcept)</div>
<svg class="abs" style="left:2px;top:194px" width="28" height="28" viewBox="0 0 28 28"><defs><radialGradient id="pg194" cx="0.45" cy="0.4" r="0.6"><stop offset="0" stop-color="#c4e0fa"/><stop offset="0.700" stop-color="#7fb6ea"/><stop offset="1" stop-color="#4a86c8"/></radialGradient></defs><circle cx="14" cy="14" r="13.300" fill="url(#pg194)"/><text x="14" y="20" font-family="DejaVu Sans, Liberation Sans, sans-serif" font-size="15.5" font-weight="normal" text-anchor="middle" fill="#3c5c86">P</text></svg>
<div class="mono" style="left:40px;top:190px;">{virtualPackage}</div>
<div class="mono" style="left:521.5px;top:190px;">^propertyDeclaration (j.m.l.core.structure.BaseConcept)</div>
<svg class="abs" style="left:2px;top:230px" width="30" height="30" viewBox="0 0 30 30"><defs><radialGradient id="eg230" cx="0.45" cy="0.4" r="0.6"><stop offset="0" stop-color="#fbf0b8"/><stop offset="0.700" stop-color="#f2d878"/><stop offset="1" stop-color="#c9a545"/></radialGradient></defs><circle cx="14" cy="16" r="13.300" fill="url(#eg230)"/><text x="13" y="22.5" font-family="DejaVu Sans, Liberation Sans, sans-serif" font-size="17" font-weight="normal" text-anchor="middle" fill="#5a4a2a">E</text><circle cx="23.500" cy="6.500" r="5.500" fill="#6ccf5c" stroke="#4aa83f" stroke-width="1"/><circle cx="22.500" cy="5.500" r="2" fill="#b5f0a5"/></svg>
<div class="mono" style="left:40px;top:228px;">#ImplementationRemovedInStubMessage#</div>
<div class="mono" style="left:665.5px;top:228px;">EditorComponentDeclaration (j.m.l.core.editor)</div>
<svg class="abs" style="left:2px;top:268px" width="30" height="30" viewBox="0 0 30 30"><defs><radialGradient id="eg268" cx="0.45" cy="0.4" r="0.6"><stop offset="0" stop-color="#fbf0b8"/><stop offset="0.700" stop-color="#f2d878"/><stop offset="1" stop-color="#c9a545"/></radialGradient></defs><circle cx="14" cy="16" r="13.300" fill="url(#eg268)"/><text x="13" y="22.5" font-family="DejaVu Sans, Liberation Sans, sans-serif" font-size="17" font-weight="normal" text-anchor="middle" fill="#5a4a2a">E</text><circle cx="23.500" cy="6.500" r="5.500" fill="#6ccf5c" stroke="#4aa83f" stroke-width="1"/><circle cx="22.500" cy="5.500" r="2" fill="#b5f0a5"/></svg>
<div class="mono" style="left:40px;top:266px;">#ShortDescriptionEditorComponent#</div>
<div class="mono" style="left:665.5px;top:266px;">EditorComponentDeclaration (j.m.l.core.editor)</div>
<svg class="abs" style="left:2px;top:306px" width="30" height="30" viewBox="0 0 30 30"><defs><radialGradient id="eg306" cx="0.45" cy="0.4" r="0.6"><stop offset="0" stop-color="#fbf0b8"/><stop offset="0.700" stop-color="#f2d878"/><stop offset="1" stop-color="#c9a545"/></radialGradient></defs><circle cx="14" cy="16" r="13.300" fill="url(#eg306)"/><text x="13" y="22.5" font-family="DejaVu Sans, Liberation Sans, sans-serif" font-size="17" font-weight="normal" text-anchor="middle" fill="#5a4a2a">E</text><circle cx="23.500" cy="6.500" r="5.500" fill="#6ccf5c" stroke="#4aa83f" stroke-width="1"/><circle cx="22.500" cy="5.500" r="2" fill="#b5f0a5"/></svg>
<div class="mono" style="left:40px;top:304px;">#VirtualPackage#</div>
<div class="mono" style="left:665.5px;top:304px;">EditorComponentDeclaration (j.m.l.core.editor)</div>
<svg class="abs" style="left:2px;top:344px" width="30" height="30" viewBox="0 0 30 30"><defs><radialGradient id="eg344" cx="0.45" cy="0.4" r="0.6"><stop offset="0" stop-color="#fbf0b8"/><stop offset="0.700" stop-color="#f2d878"/><stop offset="1" stop-color="#c9a545"/></radialGradient></defs><circle cx="14" cy="16" r="13.300" fill="url(#eg344)"/><text x="13" y="22.5" font-family="DejaVu Sans, Liberation Sans, sans-serif" font-size="17" font-weight="normal" text-anchor="middle" fill="#5a4a2a">E</text><circle cx="23.500" cy="6.500" r="5.500" fill="#6ccf5c" stroke="#4aa83f" stroke-width="1"/><circle cx="22.500" cy="5.500" r="2" fill="#b5f0a5"/></svg>
<div class="mono" style="left:40px;top:342px;">#alias#</div>
<div class="mono" style="left:665.5px;top:342px;">EditorComponentDeclaration (j.m.l.core.editor)</div>
<svg class="abs" style="left:2px;top:384px" width="28" height="28" viewBox="0 0 28 28"><linearGradient id="g11" x1="0" y1="0" x2="0" y2="1"><stop offset="0" stop-color="#c0d6e0"/><stop offset="1" stop-color="#a9c4d1"/></linearGradient><circle cx="14" cy="14" r="13.0" fill="url(#g11)" stroke="#98b6c5" stroke-width="2"/><text x="14" y="19.6" font-family="DejaVu Sans, Liberation Sans, sans-serif" font-size="15.5" font-weight="normal" text-anchor="middle" fill="#4d4d4d">N</text></svg>
<div class="mono" style="left:40px;top:380px;font-style:italic;margin-top:-1.5px;">(-</div>
<div class="mono" style="left:1018px;top:380px;margin-top:-1.5px;">child node cell</div>
</div>
</body></html>
